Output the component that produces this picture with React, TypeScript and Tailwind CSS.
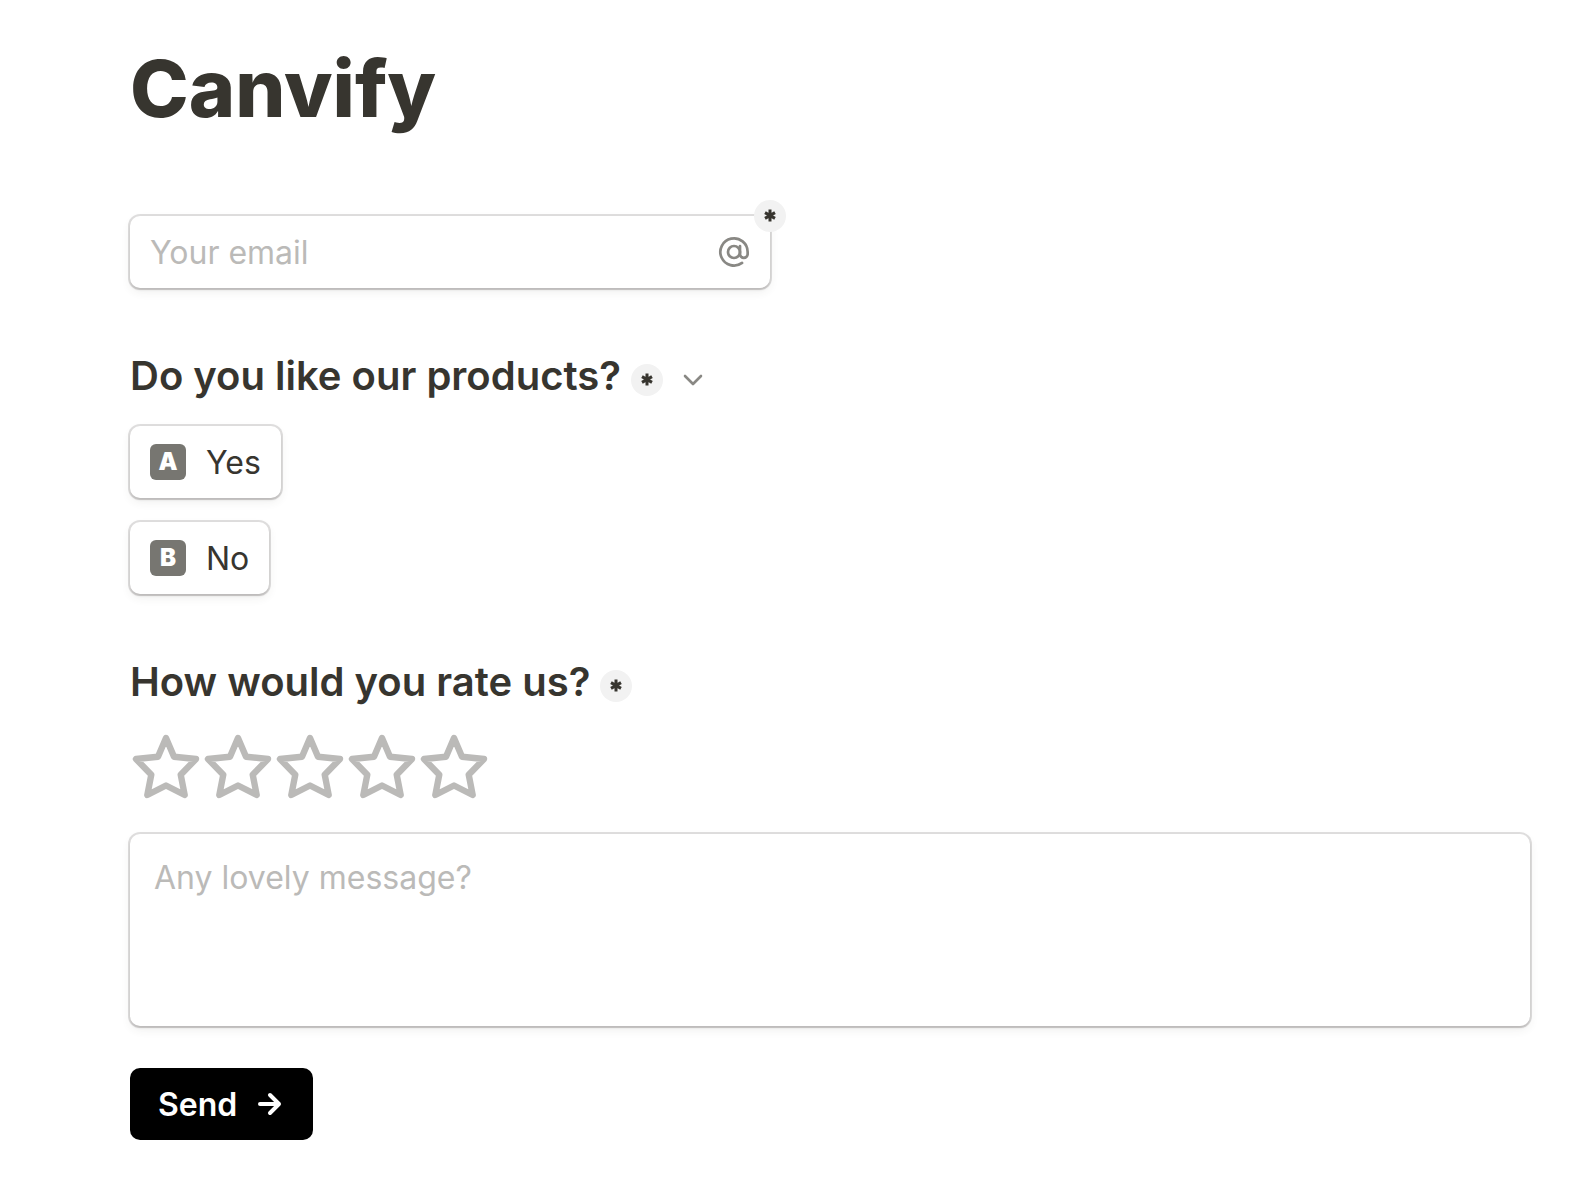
import { useState } from "react";

const boxShadow =
  "shadow-[0_0_0_2px_rgba(61,59,53,0.16),0_2px_2px_0_rgba(61,59,53,0.16),0_4px_10px_0_rgba(61,59,53,0.08)]";

const options = [
  { id: "A", label: "Yes" },
  { id: "B", label: "No" },
];

const RequiredIcon = () => (
  <span className="flex h-8 w-8 shrink-0 items-center justify-center rounded-full bg-[#f2f2f2]">
    <svg viewBox="0 0 32 32" className="h-8 w-8" stroke="#37352f" strokeWidth="3" aria-label="Required">
      <path d="M16 9.500v12M11 12.600l10 5.800M21 12.600l-10 5.800" />
    </svg>
  </span>
);

const AtIcon = () => (
  <svg viewBox="0 0 24 24" className="h-9 w-9 shrink-0" fill="none" stroke="#898884" strokeWidth="1.8" strokeLinecap="round">
    <circle cx="12" cy="12" r="4" />
    <path d="M16 8v5.400a2.550 2.550 0 0 0 5.100 0V12a9.100 9.100 0 1 0-3.700 7.300" />
  </svg>
);

const StarIcon = () => (
  <svg viewBox="0 0 72 72" className="h-18 w-18" fill="none" stroke="#bbbab8" strokeWidth="6.400" strokeLinejoin="round">
    <path d="M36 6l8 18.700L66 27 50.700 42.700l4 20.300L36 53.500 17.300 63l4-20.300L6 27l22-2.300z" />
  </svg>
);

export default function App() {
  const [rating, setRating] = useState(0);

  return (
    <main className="bg-white pt-10 pr-[60px] pb-10 pl-[130px] font-['Inter',sans-serif] text-[#37352f]">
      <h1 className="text-[79px] leading-[96px] font-extrabold">Canvify</h1>

      <form onSubmit={(e) => e.preventDefault()}>
        <div className={`relative mt-20 flex h-18 w-full max-w-[640px] items-center rounded-[10px] bg-white pr-[18px] pl-5 ${boxShadow}`}>
          <input
            type="email"
            aria-label="Your email"
            placeholder="Your email"
            className="min-w-0 flex-1 pt-0.5 text-[32px] leading-10 outline-none placeholder:text-[#bbbab8]"
          />
          <AtIcon />
          <div className="absolute -top-4 -right-4">
            <RequiredIcon />
          </div>
        </div>

        <fieldset className="mt-[62px]">
          <legend className="flex items-center">
            <span className="text-[40px] leading-[52px] font-semibold">Do you like our products?</span>
            <span className="mt-2 ml-2.5">
              <RequiredIcon />
            </span>
            <svg viewBox="0 0 28 28" className="mt-2 ml-4 h-7 w-7" fill="none" stroke="#898884" strokeWidth="2.600" strokeLinecap="round" strokeLinejoin="round">
              <path d="M6 10l8 8 8-8" />
            </svg>
          </legend>
          <div className="mt-6 flex flex-col items-start gap-6">
            {options.map((o) => (
              <button key={o.id} type="button" className={`flex h-18 items-center rounded-[10px] bg-white px-5 ${boxShadow}`}>
                <span className="flex h-9 w-9 items-center justify-center rounded-md bg-[#777671] text-2xl font-black text-white">
                  {o.id}
                </span>
                <span className="ml-5 pt-0.5 text-[32px] leading-10">{o.label}</span>
              </button>
            ))}
          </div>
        </fieldset>

        <fieldset className="mt-[62px]">
          <legend className="flex items-center">
            <span className="text-[40px] leading-[52px] font-semibold">How would you rate us?</span>
            <span className="mt-2 ml-2.5">
              <RequiredIcon />
            </span>
          </legend>
          <div className="mt-6 flex">
            {[1, 2, 3, 4, 5].map((n) => (
              <button key={n} type="button" aria-label={`${n} stars`} aria-pressed={rating === n} onClick={() => setRating(n)}>
                <StarIcon />
              </button>
            ))}
          </div>
        </fieldset>

        <textarea
          aria-label="Any lovely message?"
          placeholder="Any lovely message?"
          className={`mt-[30px] block h-48 w-full resize-none rounded-[10px] bg-white px-6 py-6 text-[32px] leading-10 outline-none placeholder:text-[#bbbab8] ${boxShadow}`}
        />

        <button type="submit" className="mt-[42px] flex h-18 items-center gap-5 rounded-[10px] bg-black px-7 text-[32px] leading-10 font-semibold text-white">
          <span className="pt-0.5">Send</span>
          <svg viewBox="0 0 28 28" className="h-7 w-7" fill="none" stroke="currentColor" strokeWidth="4" strokeLinecap="round" strokeLinejoin="round">
            <path d="M3 14h19M13 5l9 9-9 9" />
          </svg>
        </button>
      </form>
    </main>
  );
}
